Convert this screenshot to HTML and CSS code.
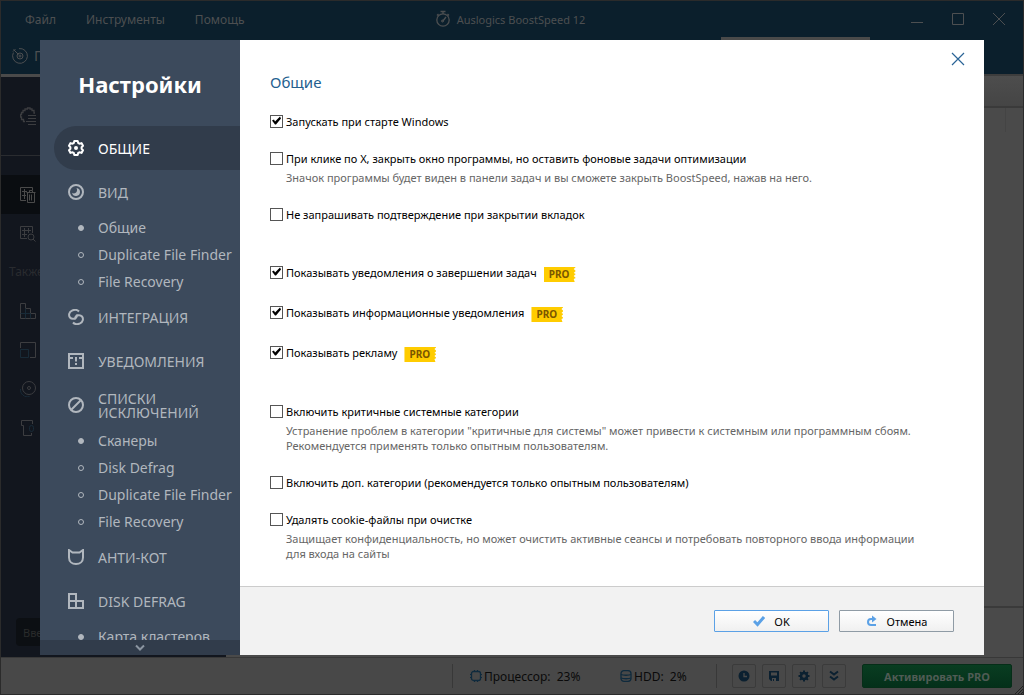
FILE: index.html
```html
<!DOCTYPE html>
<html lang="ru">
<head>
    <meta charset="UTF-8">
    <meta name="viewport" content="width=device-width, initial-scale=1.0">
    <title>Auslogics BoostSpeed 12</title>
    <link rel="stylesheet" href="styles.css">
</head>
<body>
    <div class="window">
        <header class="top">
            <div class="titlebar">
                <nav class="menu">
                    <a href="#">Файл</a>
                    <a href="#">Инструменты</a>
                    <a href="#">Помощь</a>
                </nav>
                <div class="app-title">
                    <svg width="16" height="18" viewBox="0 0 16 18" fill="none" stroke="currentColor"><circle cx="8" cy="10" r="6.2" stroke-width="1.3"/><path d="M5.5 1.5h5M8 1.5V4M12.5 4l1.5 1.5M3.5 4L2 5.5M7.5 11.5L11 7" stroke-width="1.3"/><circle cx="7.5" cy="11" r="1"/></svg>
                    <span>Auslogics BoostSpeed 12</span>
                </div>
                <div class="controls">
                    <button aria-label="Свернуть"><svg width="14" height="14" viewBox="0 0 14 14" stroke="currentColor"><path d="M1 10.5h12"/></svg></button>
                    <button aria-label="Развернуть"><svg width="14" height="14" viewBox="0 0 14 14" fill="none" stroke="currentColor"><path d="M1.5 1.5h11v11h-11z"/></svg></button>
                    <button aria-label="Закрыть программу"><svg width="14" height="14" viewBox="0 0 14 14" stroke="currentColor"><path d="M1 1l12 12M13 1L1 13"/></svg></button>
                </div>
            </div>
            <div class="tabs">
                <a class="tab" href="#">
                    <svg width="16" height="16" viewBox="0 0 16 16" fill="none" stroke="currentColor"><path d="M7 .6a7.4 7.4 0 1 1-5.6 4"/><circle cx="8" cy="8" r="3"/><circle cx="8" cy="8" r="1"/><path d="M1.5 1.5l5 5M1 3.5L3.5 1"/></svg>
                    <span>П</span>
                </a>
                <div class="tab-mark"></div>
            </div>
        </header>

        <div class="workspace">
            <aside class="tools">
                <div class="tool tool-main"><svg width="16" height="18" viewBox="0 0 16 18" fill="none" stroke="currentColor"><path d="M5 14.500H3.500v-2H1.500V10H.5V7.500h1v-2h1.500V3.500H5V2h2.500V1H10v1h2v1.500h2V6h1" stroke-width="1.300"/><path d="M8 8.500h8M8 11.500h8M6 14.500h10M8 17.500h8"/></svg></div>
                <div class="tool tool-current"><svg width="16" height="16" viewBox="0 0 16 16" fill="none" stroke="currentColor"><path d="M6 13.500H.5V.5h12V3M2 4.500h5M2 8.500h4M4.500 2v10M6.500 5.500h9M9.500 5V3.500h3V5M7.500 6v9.500h7V6M9.500 7.500v6M11.500 7.500v6"/></svg></div>
                <div class="tool"><svg width="16" height="16" viewBox="0 0 16 16" fill="none" stroke="currentColor"><path d="M7 12.500H.5V.5h12V7M2 4.500h9M2 8.500h5M4.500 2v9M8.500 2v5"/><circle cx="11" cy="11" r="3"/><path d="M13 13l2.500 2.500"/></svg></div>
                <p class="tools-label">Также</p>
                <div class="tool"><svg width="16" height="16" viewBox="0 0 16 16" fill="none" stroke="currentColor"><path d="M.5 15.500V.5h5v5h5v5h5v5z"/><path d="M.5 10.500h10v5M5.500 5.500v10" stroke="#182a37"/></svg></div>
                <div class="tool"><svg width="16" height="16" viewBox="0 0 16 16" fill="none" stroke="currentColor"><path d="M.5 6V.5h15v15H10"/><path d="M.5 7.500h8v8h-8z" stroke="#182a37"/></svg></div>
                <div class="tool"><svg width="16" height="16" viewBox="0 0 16 16" fill="none" stroke="currentColor"><circle cx="9" cy="7" r="6.500"/><circle cx="9" cy="7" r="1.500"/><path d="M.5 8a7 7 0 0 0 9 7.500" stroke="#182a37"/></svg></div>
                <div class="tool"><svg width="16" height="16" viewBox="0 0 16 16" fill="none" stroke="currentColor"><path d="M12.500 4V.500H1.500v5h2v10h8V13"/><rect x="9.500" y="5.500" width="4" height="6" rx="2" stroke="#182a37"/></svg></div>
                <div class="tools-search">
                    <input type="text" placeholder="Вве" aria-label="Вве">
                </div>
            </aside>
            <main class="results">
                <div class="results-head"></div>
                <div class="results-list"><div class="results-column"></div></div>
                <div class="results-foot"></div>
            </main>
        </div>

        <footer class="statusbar">
            <div class="stat stat-cpu">
                <svg width="12" height="12" viewBox="0 0 12 12" fill="none" stroke="#0f2a3d"><rect x="1.500" y="1.500" width="9" height="9" rx="2" stroke-width="1.300"/><path d="M4.500 0v2M7.500 0v2M4.500 10v2M7.500 10v2M0 4.500h2M0 7.500h2M10 4.500h2M10 7.500h2"/></svg>
                <span>Процессор:&nbsp; 23%</span>
            </div>
            <div class="stat stat-hdd">
                <svg width="12" height="12" viewBox="0 0 12 12" fill="none" stroke="#0f2a3d" stroke-width="1.300"><rect x="1" y=".7" width="10" height="10.600" rx="3"/><path d="M1 4.500c2 1 8 1 10 0M1 8c2 1 8 1 10 0"/></svg>
                <span>HDD:&nbsp; 2%</span>
            </div>
            <div class="quick">
                <button aria-label="Расписание"><svg width="12" height="12" viewBox="0 0 12 12"><circle cx="6" cy="6" r="5.500" fill="#0b2030"/><path d="M6 3v3.500h3" fill="none" stroke="#4a4a4a" stroke-width="1.300"/></svg></button>
                <button aria-label="Сохранить"><svg width="12" height="12" viewBox="0 0 12 12"><path d="M1 1h10v10H3L1 9z" fill="#0b2030"/><path d="M3 2.500h6v3H3zM4 8h4v3H6V9H5v2H4z" fill="#4a4a4a"/></svg></button>
                <button aria-label="Настройки"><svg width="12" height="12" viewBox="0 0 12 12" fill="none" stroke="#0b2030"><circle cx="6" cy="6" r="3" stroke-width="2.500"/><path d="M6 .5v2M6 9.500v2M.5 6h2M9.500 6h2M2.100 2.100l1.400 1.400M8.500 8.500l1.400 1.400M9.900 2.100L8.500 3.500M3.500 8.500L2.100 9.900" stroke-width="2"/></svg></button>
                <button aria-label="Ещё"><svg width="12" height="12" viewBox="0 0 12 12" fill="none" stroke="#0b2030" stroke-width="2"><path d="M2 1.500l4 3 4-3M2 6.500l4 3 4-3"/></svg></button>
            </div>
            <button class="activate">Активировать PRO</button>
            <svg class="grip" width="8" height="8" viewBox="0 0 8 8" stroke="#222"><path d="M0 8l8-8M3 8l5-5M6 8l2-2"/></svg>
        </footer>
    </div>

    <div class="dialog" role="dialog" aria-labelledby="dialogTitle">
        <aside class="sidebar">
            <h1 id="dialogTitle">Настройки</h1>
            <nav class="sections">
                <a class="section active" href="#">
                    <svg width="16" height="16" viewBox="0 0 16 16" fill="none" stroke="currentColor" stroke-width="2" stroke-linejoin="round"><path d="M6.300 1h3.400l.5 2 1.300.7 2-.6 1.500 2.700L13.600 7.200v1.600l1.400 1.400-1.500 2.700-2-.6-1.300.7-.5 2H6.300l-.5-2-1.300-.7-2 .6L1 10.200l1.400-1.400V7.200L1 5.800l1.500-2.700 2 .6L5.800 3z"/><circle cx="8" cy="8" r="2" fill="currentColor" stroke="none"/></svg>
                    <span>ОБЩИЕ</span>
                </a>
                <a class="section" href="#">
                    <svg width="16" height="16" viewBox="0 0 16 16"><circle cx="8" cy="8" r="7" fill="none" stroke="currentColor" stroke-width="2"/><path d="M8.500 4a4 4 0 1 1-4.400 4.800c1.400 1 3.500.7 4.400-.8.800-1.300.7-2.800 0-4z" fill="currentColor"/></svg>
                    <span>ВИД</span>
                </a>
                <a class="sub filled" href="#">Общие</a>
                <a class="sub" href="#">Duplicate File Finder</a>
                <a class="sub" href="#">File Recovery</a>
                <a class="section" href="#">
                    <svg width="16" height="16" viewBox="0 0 16 16" fill="none" stroke="currentColor" stroke-width="2"><path d="M11 2.500C9.500.9 6.500.5 4 1.600 1 3 .3 6.500 2 8.500c1.500 1.700 4.300 1.700 5.700.5C9 8 8.800 6 8.500 5.500"/><path d="M5 13.500c1.500 1.600 4.500 2 7 .9 3-1.400 3.700-4.900 2-6.900-1.500-1.700-4.300-1.700-5.700-.5C7 8 7.200 10 7.500 10.500"/></svg>
                    <span>ИНТЕГРАЦИЯ</span>
                </a>
                <a class="section" href="#">
                    <svg width="16" height="16" viewBox="0 0 16 16" fill="none" stroke="currentColor" stroke-width="2"><path d="M1 1h14v14H1zM1 5h4M11 5h4M8 4v4.500M8 10v2"/></svg>
                    <span>УВЕДОМЛЕНИЯ</span>
                </a>
                <a class="section" href="#">
                    <svg width="16" height="16" viewBox="0 0 16 16" fill="none" stroke="currentColor" stroke-width="2"><circle cx="8" cy="8" r="7"/><path d="M3.500 12.500l9-9"/></svg>
                    <span>СПИСКИ<br>ИСКЛЮЧЕНИЙ</span>
                </a>
                <a class="sub filled" href="#">Сканеры</a>
                <a class="sub" href="#">Disk Defrag</a>
                <a class="sub" href="#">Duplicate File Finder</a>
                <a class="sub" href="#">File Recovery</a>
                <a class="section" href="#">
                    <svg width="16" height="16" viewBox="0 0 16 16" fill="none" stroke="currentColor" stroke-width="2"><path d="M1 1l3.500 2.500h7L15 1v7.500C15 12.500 12 15 8 15s-7-2.500-7-6.500z"/></svg>
                    <span>АНТИ-КОТ</span>
                </a>
                <a class="section" href="#">
                    <svg width="16" height="16" viewBox="0 0 16 16" fill="none" stroke="currentColor" stroke-width="2"><path d="M1 15V1h7v7h7v7zM1 8h7v7"/></svg>
                    <span>DISK DEFRAG</span>
                </a>
                <a class="sub filled" href="#">Карта кластеров</a>
            </nav>
            <button class="more" aria-label="Прокрутить вниз"><svg width="10" height="8" viewBox="0 0 10 8" fill="none" stroke="currentColor" stroke-width="2"><path d="M1 1.500l4 4 4-4"/></svg></button>
        </aside>

        <form class="panel">
            <button class="close" type="button" aria-label="Закрыть"><svg width="14" height="14" viewBox="0 0 14 14" stroke="currentColor" stroke-width="1.200"><path d="M1 1l12 12M13 1L1 13"/></svg></button>
            <div class="options">
                <h2>Общие</h2>
                <div class="group">
                    <div class="option">
                        <label><input type="checkbox" checked>Запускать при старте Windows</label>
                    </div>
                    <div class="option">
                        <label><input type="checkbox">При клике по X, закрыть окно программы, но оставить фоновые задачи оптимизации</label>
                        <p>Значок программы будет виден в панели задач и вы сможете закрыть BoostSpeed, нажав на него.</p>
                    </div>
                    <div class="option">
                        <label><input type="checkbox">Не запрашивать подтверждение при закрытии вкладок</label>
                    </div>
                </div>
                <div class="group group-pro">
                    <div class="option">
                        <label><input type="checkbox" checked>Показывать уведомления о завершении задач</label><span class="pro">PRO</span>
                    </div>
                    <div class="option">
                        <label><input type="checkbox" checked>Показывать информационные уведомления</label><span class="pro">PRO</span>
                    </div>
                    <div class="option">
                        <label><input type="checkbox" checked>Показывать рекламу</label><span class="pro">PRO</span>
                    </div>
                </div>
                <div class="group">
                    <div class="option">
                        <label><input type="checkbox">Включить критичные системные категории</label>
                        <p>Устранение проблем в категории "критичные для системы" может привести к системным или программным сбоям.<br>Рекомендуется применять только опытным пользователям.</p>
                    </div>
                    <div class="option">
                        <label><input type="checkbox">Включить доп. категории (рекомендуется только опытным пользователям)</label>
                    </div>
                    <div class="option">
                        <label><input type="checkbox">Удалять cookie-файлы при очистке</label>
                        <p>Защищает конфиденциальность, но может очистить активные сеансы и потребовать повторного ввода информации<br>для входа на сайты</p>
                    </div>
                </div>
            </div>
            <div class="actions">
                <button class="ok" type="submit"><svg width="12" height="12" viewBox="0 0 12 12" fill="none" stroke="#5ba1e6" stroke-width="3"><path d="M1 6l3.500 3.500L11 2"/></svg>OK</button>
                <button type="button"><svg width="12" height="12" viewBox="0 0 12 12"><path d="M7 4H5a3 3 0 0 0 0 6h5" fill="none" stroke="#5ba1e6" stroke-width="2"/><path d="M6 .5L10.500 4 6 7.500z" fill="#5ba1e6"/></svg>Отмена</button>
            </div>
        </form>
    </div>
</body>
</html>
```
FILE: styles.css
```css
*, *::before {
    box-sizing: border-box;
}

body {
    margin: 0;
    height: 100vh;
    overflow: hidden;
    position: relative;
    font-family: "Noto Sans", "Open Sans", sans-serif;
    font-size: 11px;
    background: #494949;
}

h1, h2, p {
    margin: 0;
    font-weight: normal;
}

a {
    color: inherit;
    text-decoration: none;
}

button {
    font: inherit;
    color: inherit;
    padding: 0;
    border: none;
    background: none;
    display: flex;
    align-items: center;
    justify-content: center;
}

svg {
    flex: none;
}

/* main window */
.window {
    height: 100%;
    display: flex;
    flex-direction: column;
    border: 1px solid #2b2b2b;
}

.top {
    background: #0b1f2c;
    color: #4d4f51;
}

.titlebar {
    display: grid;
    grid-template-columns: 1fr auto 1fr;
    align-items: center;
    height: 36px;
}

.menu {
    display: flex;
    gap: 30px;
    padding-left: 24px;
    font-size: 12px;
}

.app-title {
    display: flex;
    align-items: center;
    gap: 6px;
    padding-right: 4px;
}

.controls {
    display: flex;
    justify-content: flex-end;
    padding-right: 4px;
}

.controls button {
    width: 41px;
    height: 36px;
}

.tabs {
    display: flex;
    justify-content: space-between;
    height: 37px;
}

.tab {
    display: flex;
    align-items: center;
    gap: 6px;
    width: 120px;
    padding-left: 11px;
    font-size: 14px;
}

.tab-mark {
    width: 149px;
    height: 3px;
    margin-right: 153px;
    background: #4a4a4a;
}

.workspace {
    flex: 1;
    display: flex;
    min-height: 0;
}

.tools {
    display: flex;
    flex-direction: column;
    width: 225px;
    background: #12161e;
    border-top: 3px solid #4a4a4a;
    color: #3c3d40;
}

.tool {
    display: flex;
    align-items: center;
    height: 39px;
    padding-left: 19px;
}

.tool-main {
    height: 79px;
    border-bottom: 1px solid #2a2c30;
    margin-bottom: 19px;
}

.tool-current {
    background: #0a0d11;
    color: #4a4a4a;
}

.tools-label {
    height: 38px;
    padding-left: 8px;
    line-height: 38px;
    font-size: 12px;
    color: #292b2f;
}

.tools-search {
    margin: auto 12px 11px 15px;
}

.tools-search input {
    width: 100%;
    height: 28px;
    padding: 0 7px;
    border: none;
    border-radius: 4px;
    background: #0c0f13;
    font: inherit;
}

.tools-search input::placeholder {
    color: #292b2b;
}

.results {
    flex: 1;
    display: flex;
    flex-direction: column;
    background: #4a4a4a;
}

.results-head {
    height: 34px;
    border-top: 2px solid #3d3d3d;
    border-bottom: 2px solid #3a3a3a;
    background: linear-gradient(#4d4d4d, #454545);
}

.results-list {
    flex: 1;
    display: flex;
    justify-content: flex-end;
    border-bottom: 2px solid #3a3a3a;
}

.results-column {
    width: 18px;
    height: 24px;
    border-left: 1px solid #444;
}

.results-foot {
    height: 49px;
}

.statusbar {
    position: relative;
    display: flex;
    align-items: center;
    justify-content: flex-end;
    height: 37px;
    padding-right: 11px;
    border-top: 1px solid #383838;
    background: #484848;
    color: #0a0a0a;
}

.stat {
    display: flex;
    align-items: center;
    gap: 2px;
    height: 24px;
    font-size: 12px;
}

.stat-cpu {
    width: 168px;
    padding-left: 17px;
    border-left: 1px solid #383838;
}

.stat-hdd {
    width: 96px;
}

.quick {
    display: flex;
    gap: 6px;
    padding: 0 16px 0 15px;
    border-left: 1px solid #383838;
}

.quick button {
    width: 24px;
    height: 24px;
    border: 1px solid #3b3b3b;
    border-radius: 2px;
}

.activate {
    width: 150px;
    height: 24px;
    border: 1px solid #062e18;
    border-radius: 2px;
    background: linear-gradient(#093d21, #04301a);
    color: #505c55;
    font-weight: bold;
}

.grip {
    position: absolute;
    right: 0;
    bottom: 0;
}

/* settings dialog */
.dialog {
    position: absolute;
    inset: 40px;
    display: flex;
    background: #fff;
}

.sidebar {
    display: flex;
    flex-direction: column;
    width: 200px;
    background: #3c4a5c;
    color: #b1b7be;
}

.sidebar h1 {
    height: 86px;
    line-height: 88px;
    text-align: center;
    font-size: 22px;
    font-weight: bold;
    color: #fff;
}

.sections {
    flex: 1;
    min-height: 0;
    overflow: hidden;
    font-size: 14px;
    white-space: nowrap;
}

.section {
    display: flex;
    align-items: center;
    gap: 14px;
    height: 44px;
    margin-left: 14px;
    padding-left: 14px;
    border-radius: 22px 0 0 22px;
    line-height: 14px;
}

.section span {
    padding-top: 1px;
}

.section.active {
    background: #313c4b;
    color: #fff;
}

.sub {
    display: flex;
    align-items: center;
    gap: 14px;
    height: 27px;
    padding-left: 38px;
}

.sub::before {
    content: "";
    width: 6px;
    height: 6px;
    border: 1px solid currentColor;
    border-radius: 50%;
}

.sub.filled::before {
    background: currentColor;
}

.more {
    height: 15px;
    background: #313c4b;
    color: #8b95a1;
}

.panel {
    flex: 1;
    min-width: 0;
    position: relative;
    display: flex;
    flex-direction: column;
}

.close {
    position: absolute;
    top: 9px;
    right: 16px;
    width: 20px;
    height: 20px;
    color: #2a6496;
}

.options {
    flex: 1;
    min-height: 0;
    padding: 32px 30px 0;
    color: #000;
}

.options h2 {
    height: 22px;
    margin-bottom: 18px;
    line-height: 20px;
    font-size: 15px;
    color: #24608f;
}

.group {
    display: flex;
    flex-direction: column;
    gap: 19px;
    margin-bottom: 40px;
}

.group-pro {
    gap: 22px;
    margin-bottom: 41px;
}

.option label {
    display: inline-flex;
    align-items: center;
    gap: 3px;
    height: 18px;
    vertical-align: top;
}

.option p {
    margin: 3px 0 1px 16px;
    line-height: 15px;
    color: #666;
}

.option input {
    appearance: none;
    flex: none;
    width: 13px;
    height: 13px;
    margin: 0;
    border: 1px solid #555;
    background: #fff;
}

.option input:checked::before {
    content: "";
    display: block;
    width: 11px;
    height: 11px;
    background: #000;
    clip-path: polygon(1px 5px, 3px 4px, 4px 6px, 9px 1px, 10px 3px, 5px 9px, 4px 9px);
}

.pro {
    display: inline-block;
    width: 32px;
    height: 15px;
    margin: 4px 0 0 7px;
    line-height: 15px;
    padding-left: 5px;
    font-size: 10px;
    font-weight: bold;
    color: #7a5600;
    background: #ffcc00;
    vertical-align: top;
    clip-path: polygon(0 0, 32px 0, 30px 2px, 32px 4px, 30px 6px, 32px 7px, 30px 9px, 32px 11px, 30px 12px, 31px 15px, 0 15px);
}

.group-pro .option {
    height: 18px;
}

.actions {
    flex: none;
    display: flex;
    align-items: center;
    justify-content: flex-end;
    gap: 10px;
    height: 69px;
    padding-right: 30px;
    border-top: 1px solid #ccc;
    background: #f2f2f2;
}

.actions button {
    gap: 9px;
    width: 115px;
    height: 22px;
    border: 1px solid #8f9ba5;
    border-radius: 1px;
    background: linear-gradient(#fff, #f0f0f0);
    color: #000;
}

.actions .ok {
    border-color: #5ba1e6;
}
```
